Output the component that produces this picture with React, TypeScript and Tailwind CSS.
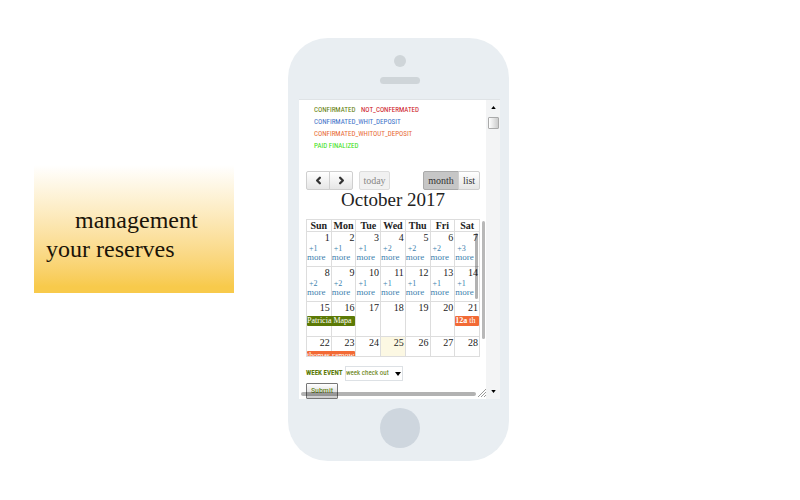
import React from "react";
import { ChevronLeft, ChevronRight } from "lucide-react";

type Day = { n: number; more?: number; event?: { label: string; lead?: string; color: string; width: string } };

const WEEKDAYS = ["Sun", "Mon", "Tue", "Wed", "Thu", "Fri", "Sat"];

const WEEKS: Day[][] = [
  [1, 1, 1, 2, 2, 2, 3].map((more, i) => ({ n: i + 1, more })),
  [2, 2, 1, 1, 1, 1, 1].map((more, i) => ({ n: i + 8, more })),
  [
    { n: 15, event: { label: "Patricia Mapa", color: "bg-[#5c7a06]", width: "w-12" } },
    { n: 16 },
    { n: 17 },
    { n: 18 },
    { n: 19 },
    { n: 20 },
    { n: 21, event: { lead: "12a", label: "th", color: "bg-[#f26a35]", width: "w-6" } },
  ],
  [
    { n: 22, event: { label: "thomas ramow", color: "bg-[#f26a35]", width: "w-12" } },
    { n: 23 },
    { n: 24 },
    { n: 25 },
    { n: 26 },
    { n: 27 },
    { n: 28 },
  ],
];

const SERIF = "font-['Liberation_Serif',serif]";
const SANS = "font-['Roboto_Condensed','Lato',sans-serif]";
const BUTTON = "h-full border border-[#cfcfcf] bg-linear-to-b from-white to-[#e6e6e6]";

function DayCell({ day }: { day: Day }) {
  return (
    <td className={`h-[35px] border border-[#ddd] p-0 align-top ${day.n === 25 ? "bg-[#fcf8e3]" : ""}`}>
      <div className="h-3 pr-px text-right text-[10px] leading-3 text-[#222]">{day.n}</div>
      {day.more && (
        <a href="#more" className="block text-[9px] leading-[9px] text-[#3d7fae]">
          <span className="block pl-0.5 text-[8px]">+{day.more}</span>
          more
        </a>
      )}
      {day.event && (
        <div
          className={`relative z-10 mt-0.5 h-2.5 overflow-hidden rounded-[1px] text-[8px] leading-[10px] whitespace-nowrap text-white ${day.event.color} ${day.event.width}`}
        >
          {day.event.lead && <b>{day.event.lead} </b>}
          {day.event.label}
        </div>
      )}
    </td>
  );
}

function Calendar() {
  return (
    <section className={SERIF}>
      <div className="flex h-[19px] text-[10px] text-[#333]">
        <button aria-label="Previous month" className={`${BUTTON} flex w-6 items-center justify-center rounded-l-[2px]`}>
          <ChevronLeft size={11} strokeWidth={5} />
        </button>
        <button aria-label="Next month" className={`${BUTTON} -ml-px flex w-6 items-center justify-center rounded-r-[2px]`}>
          <ChevronRight size={11} strokeWidth={5} />
        </button>
        <button disabled className="ml-1.5 h-full w-[31px] rounded-[2px] border border-[#ddd] bg-[#f1f1f1] text-[#888]">
          today
        </button>
        <button className="ml-auto h-full w-9 rounded-l-[2px] border border-[#aaa] bg-[#c6c6c6]">month</button>
        <button className={`${BUTTON} -ml-px w-[22px] rounded-r-[2px]`}>list</button>
      </div>
      <h2 className="text-center text-[19px] leading-5 text-[#222]">October 2017</h2>
      <div className="relative mt-[9px]">
        <div className="h-[138px] overflow-hidden border-b border-[#ddd]">
          <table className="w-full table-fixed border-collapse">
            <thead>
              <tr>
                {WEEKDAYS.map((name) => (
                  <th key={name} className="h-3 border border-[#ddd] p-0 text-[10px] leading-[11px] font-bold text-[#222]">
                    {name}
                  </th>
                ))}
              </tr>
            </thead>
            <tbody>
              {WEEKS.map((week) => (
                <tr key={week[0].n}>
                  {week.map((day) => (
                    <DayCell key={day.n} day={day} />
                  ))}
                </tr>
              ))}
            </tbody>
          </table>
        </div>
        <div className="absolute top-3.5 right-[2px] z-20 h-[66px] w-[3px] rounded-full bg-black/30" />
        <div className="absolute top-0.5 -right-[5px] h-[118px] w-[3px] rounded-full bg-[#b8b8b8]" />
      </div>
    </section>
  );
}

function Screen() {
  return (
    <div className="flex h-[300px] border-t border-[#dfe3e6] bg-white">
      <div className="relative min-w-0 flex-1 overflow-hidden pl-[7px]">
        <div className={`h-[71px] pt-1 pl-2 text-[7px] leading-3 whitespace-nowrap ${SANS}`}>
          <p className="text-[#5c7a06]">
            CONFIRMATED <span className="ml-1 text-[#cc1020]">NOT_CONFERMATED</span>
          </p>
          <p className="text-[#3d70c8]">CONFIRMATED_WHIT_DEPOSIT</p>
          <p className="text-[#e86a35]">CONFIRMATED_WHITOUT_DEPOSIT</p>
          <p className="text-[#35e010]">PAID FINALIZED</p>
        </div>
        <div className="pr-[6px]">
          <Calendar />
        </div>
        <form className={`text-[7px] text-[#5c7a06] ${SANS}`} onSubmit={(e) => e.preventDefault()}>
          <div className="mt-2 flex h-4 items-center">
            <label htmlFor="week" className="w-[39px] font-bold tracking-normal whitespace-nowrap">
              WEEK EVENT
            </label>
            <div className="relative">
              <select id="week" className="h-[15px] w-[58px] appearance-none border border-[#dde1e5] bg-white">
                <option>week check out</option>
              </select>
              <svg viewBox="0 0 6 4" className="pointer-events-none absolute top-1.5 right-0.5 h-1 w-1.5 fill-black">
                <path d="M0 0h6L3 4z" />
              </svg>
            </div>
          </div>
          <button className="mt-0.5 block h-4 w-8 rounded-[1px] border border-[#777] bg-linear-to-b from-white to-[#ccc] text-[8px]">
            Submit
          </button>
        </form>
        <div className="absolute right-2.5 bottom-[3px] left-0.5 h-1 rounded-full bg-black/30" />
        <svg viewBox="0 0 8 8" className="absolute right-0 bottom-0.5 size-2 stroke-[#999]">
          <path d="M0 8 8 0M3 8l5-5M6 8l2-2" />
        </svg>
      </div>
      <div className="flex w-3.5 flex-col items-center bg-[#f3f4f5] py-1.5">
        <svg viewBox="0 0 6 4" className="h-[3px] w-[5px] fill-black">
          <path d="M0 4h6L3 0z" />
        </svg>
        <div className="mt-2 h-3 w-[11px] rounded-[1px] border border-[#aaa] bg-linear-to-r from-white to-[#ccc]" />
        <svg viewBox="0 0 6 4" className="mt-auto h-[3px] w-[5px] fill-black">
          <path d="M0 0h6L3 4z" />
        </svg>
      </div>
    </div>
  );
}

export default function App() {
  return (
    <main className="flex min-h-screen items-start bg-white">
      <div className="mt-[165px] ml-[34px] h-32 w-[200px] shrink-0 bg-linear-to-b from-white to-[#f8ca4b] to-95% pt-[41px] pl-3 font-['Liberation_Serif',serif] text-2xl leading-[29px] text-[#1a1408]">
        <p className="pl-[29px]">management</p>
        <p>your reserves</p>
      </div>
      <div className="mt-[38px] ml-[54px] w-[221px] shrink-0 rounded-[40px] bg-[#e9eef2] pr-[9px] pb-[13px] pl-[11px]">
        <div className="flex h-[61px] flex-col items-center pt-[17px]">
          <div className="size-3 rounded-full bg-[#cfd5d9]" />
          <div className="mt-2.5 h-[7px] w-10 rounded-full bg-[#cfd5d9]" />
        </div>
        <Screen />
        <div className="mx-auto mt-[9px] size-10 rounded-full bg-[#ced6de]" />
      </div>
    </main>
  );
}
